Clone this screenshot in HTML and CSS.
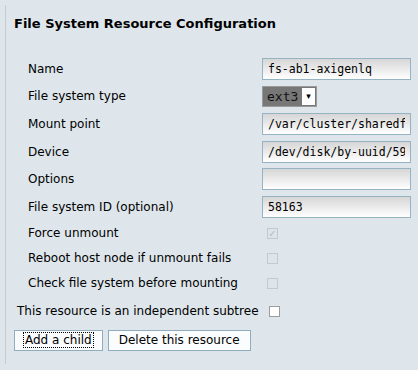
FILE: index.html
```html
<!DOCTYPE html>
<html lang="en">
<head>
  <meta charset="UTF-8">
  <title>File System Resource Configuration</title>
  <link rel="stylesheet" href="styles.css">
</head>
<body>
  <div class="panel">
    <h2>File System Resource Configuration</h2>
    <form class="config">
      <div class="fields">
        <label for="name">Name</label>
        <input class="text" type="text" id="name" value="fs-ab1-axigenlq">

        <label for="fstype">File system type</label>
        <span class="select"><span class="select-value">ext3</span><span class="select-arrow">&#9662;</span></span>

        <label for="mountpoint">Mount point</label>
        <input class="text" type="text" id="mountpoint" value="/var/cluster/sharedfs">

        <label for="device">Device</label>
        <input class="text" type="text" id="device" value="/dev/disk/by-uuid/59">

        <label for="options">Options</label>
        <input class="text" type="text" id="options" value="">

        <label for="fsid">File system ID (optional)</label>
        <input class="text" type="text" id="fsid" value="58163">

        <label>Force unmount</label>
        <span class="box disabled checked">&#10003;</span>

        <label>Reboot host node if unmount fails</label>
        <span class="box disabled"></span>

        <label>Check file system before mounting</label>
        <span class="box disabled"></span>
      </div>

      <div class="subtree">
        <span>This resource is an independent subtree</span>
        <span class="box"></span>
      </div>

      <div class="buttons">
        <button type="button" class="btn focused"><span>Add a child</span></button>
        <button type="button" class="btn">Delete this resource</button>
      </div>
    </form>
  </div>
</body>
</html>
```

FILE: styles.css
```css
* {
  box-sizing: border-box;
}
body {
  margin: 0;
  background-color: #dee6ec;
  font-family: "DejaVu Sans", Verdana, sans-serif;
  font-size: 12px;
  color: #000;
}
.panel {
  margin: 5px 0 0 5px;
  height: 359px;
  border-left: 1px solid #c8cdd1;
  padding: 11px 0 0 8px;
}
h2 {
  margin: 0;
  font-size: 13px;
  line-height: 16px;
  font-weight: bold;
}
.fields {
  display: grid;
  grid-template-columns: 234px 149px;
  grid-template-rows: repeat(6, 27.6px) repeat(3, 25px);
  align-items: center;
  margin-top: 23px;
  padding-left: 14px;
}
.text {
  width: 149px;
  height: 22px;
  border: 1px solid #94b3c3;
  background: linear-gradient(#d6d6d6, #ffffff);
  font-family: "DejaVu Sans Mono", monospace;
  font-size: 11.5px;
  padding: 0 5px;
  color: #000;
}
.select {
  display: flex;
  width: 55px;
  height: 21px;
  background-color: #777;
  border: 1px solid #9a9a9a;
  align-items: stretch;
}
.select-value {
  flex: 1;
  font-family: "DejaVu Sans Mono", monospace;
  font-size: 13px;
  line-height: 19px;
  padding-left: 4px;
  color: #111;
}
.select-arrow {
  width: 13px;
  margin: 1px;
  background-color: #fff;
  font-size: 9px;
  text-align: center;
  line-height: 17px;
}
.box {
  display: inline-block;
  width: 11px;
  height: 11px;
  border: 1px solid #9c9c9c;
  background-color: #fff;
  font-size: 10px;
  line-height: 9px;
  text-align: center;
  color: #bbb;
}
.box.disabled {
  margin-left: 5px;
  background-color: #dde5eb;
  border-color: #c4c9cd;
}
.subtree {
  display: flex;
  align-items: center;
  gap: 10px;
  margin-top: 3px;
  padding-left: 3px;
  height: 25px;
}
.buttons {
  display: flex;
  gap: 5px;
  margin-top: 6px;
}
.btn {
  height: 21px;
  border: 1px solid #8fadbe;
  background-color: #fafcfd;
  font-family: "DejaVu Sans", Verdana, sans-serif;
  font-size: 12px;
  padding: 0 10px;
  color: #000;
}
.btn.focused {
  padding: 0 9px;
}
.btn.focused span {
  outline: 1px dotted #000;
  padding: 0 1px;
}
```
